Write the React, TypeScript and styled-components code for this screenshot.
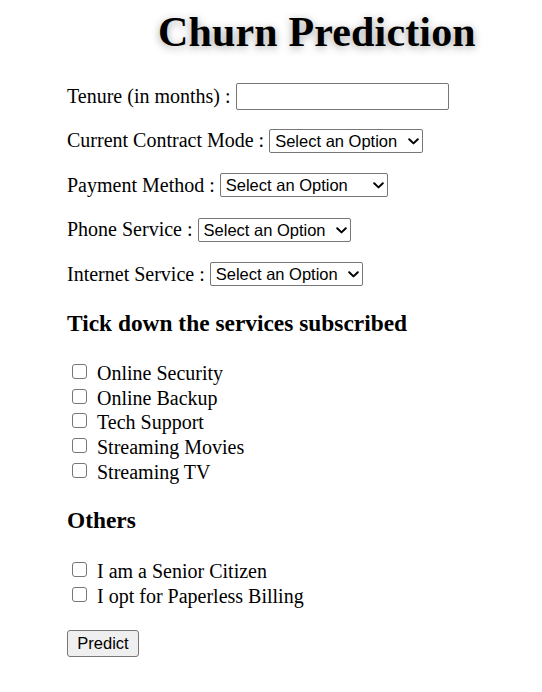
import React from "react";
import styled, { createGlobalStyle } from "styled-components";

const Global = createGlobalStyle`
  html, body { margin: 0; padding: 0; background: #ffffff; }
  body { font-family: "Liberation Serif", "Times New Roman", serif; color: #000; }
`;

const Page = styled.main`
  padding-left: 67px;
  width: 542px;
  box-sizing: border-box;
`;

const Title = styled.h1`
  margin: 0 0 0 91px;
  height: 73.75px;
  line-height: 64px;
  font-size: 42px;
  font-weight: bold;
  letter-spacing: 0.15px;
  text-shadow: 0 2px 8px rgba(0, 0, 0, 0.35);
`;

const Form = styled.form`
  display: flex;
  flex-direction: column;
`;

const FieldRow = styled.div`
  display: flex;
  align-items: center;
  gap: 5px;
  height: 44.5px;
  font-size: 20px;
`;

const Label = styled.label`
  white-space: nowrap;
`;

const TextInput = styled.input`
  box-sizing: border-box;
  width: 213px;
  height: 27px;
  border: 1px solid #767676;
  border-radius: 2px;
  padding: 1px 4px;
  font-family: "Liberation Sans", Arial, sans-serif;
  font-size: 16px;
  outline: none;
`;

const SelectWrap = styled.span`
  position: relative;
  display: inline-flex;
  align-items: center;
`;

const Select = styled.select<{ $w: number }>`
  appearance: none;
  -webkit-appearance: none;
  box-sizing: border-box;
  width: ${(p) => p.$w}px;
  height: 24px;
  border: 1px solid #767676;
  border-radius: 2px;
  background: #fff;
  color: #000;
  font-family: "Liberation Sans", Arial, sans-serif;
  font-size: 16.5px;
  padding: 0 18px 0 5px;
  outline: none;
`;

const Chevron = styled.svg`
  position: absolute;
  right: 4px;
  top: 50%;
  width: 11px;
  height: 7px;
  margin-top: -3px;
  pointer-events: none;
`;

const SectionTitle = styled.h3<{ $top: number; $bottom: number }>`
  margin: ${(p) => p.$top}px 0 ${(p) => p.$bottom}px;
  height: 28px;
  line-height: 28px;
  font-size: 23.4px;
  font-weight: bold;
`;

const CheckList = styled.div`
  display: flex;
  flex-direction: column;
`;

const CheckRow = styled.label`
  box-sizing: border-box;
  display: flex;
  align-items: center;
  height: 24.75px;
  font-size: 20px;
  padding-top: 1px;
`;

const Box = styled.input`
  appearance: none;
  -webkit-appearance: none;
  box-sizing: border-box;
  width: 15px;
  height: 15px;
  border: 1px solid #767676;
  border-radius: 3px;
  background: #fff;
  margin: -4px 10px 0 5px;
`;

const PredictButton = styled.button`
  margin-top: 22px;
  align-self: flex-start;
  box-sizing: border-box;
  width: 72px;
  height: 27px;
  border: 1px solid #767676;
  border-radius: 3px;
  background: #efefef;
  font-family: "Liberation Sans", Arial, sans-serif;
  font-size: 16.5px;
  color: #000;
  padding: 0;
`;

const selects = [
  { label: "Current Contract Mode :", w: 154, opts: ["Month-to-month", "One year", "Two year"] },
  { label: "Payment Method :", w: 168, opts: ["Electronic check", "Mailed check", "Bank transfer", "Credit card"] },
  { label: "Phone Service :", w: 153, opts: ["Yes", "No"] },
  { label: "Internet Service :", w: 153, opts: ["DSL", "Fiber optic", "No"] },
];

const services = ["Online Security", "Online Backup", "Tech Support", "Streaming Movies", "Streaming TV"];
const others = ["I am a Senior Citizen", "I opt for Paperless Billing"];

export default function App() {
  return (
    <>
      <Global />
      <Page>
        <Title>Churn Prediction</Title>
        <Form onSubmit={(e) => e.preventDefault()}>
          <FieldRow>
            <Label>Tenure (in months) :</Label>
            <TextInput type="text" />
          </FieldRow>
          {selects.map((s) => (
            <FieldRow key={s.label}>
              <Label>{s.label}</Label>
              <SelectWrap>
                <Select $w={s.w} defaultValue="">
                  <option value="">Select an Option</option>
                  {s.opts.map((o) => (
                    <option key={o} value={o}>{o}</option>
                  ))}
                </Select>
                <Chevron viewBox="0 0 11 7" aria-hidden="true">
                  <path d="M1.2 1.2 L5.5 5.4 L9.8 1.2" fill="none" stroke="#000" strokeWidth="2" strokeLinecap="round" strokeLinejoin="round" />
                </Chevron>
              </SelectWrap>
            </FieldRow>
          ))}
          <SectionTitle $top={12.75} $bottom={23.6}>Tick down the services subscribed</SectionTitle>
          <CheckList>
            {services.map((s) => (
              <CheckRow key={s}>
                <Box type="checkbox" />
                {s}
              </CheckRow>
            ))}
          </CheckList>
          <SectionTitle $top={21.6} $bottom={24.6}>Others</SectionTitle>
          <CheckList>
            {others.map((s) => (
              <CheckRow key={s}>
                <Box type="checkbox" />
                {s}
              </CheckRow>
            ))}
          </CheckList>
          <PredictButton type="submit">Predict</PredictButton>
        </Form>
      </Page>
    </>
  );
}
